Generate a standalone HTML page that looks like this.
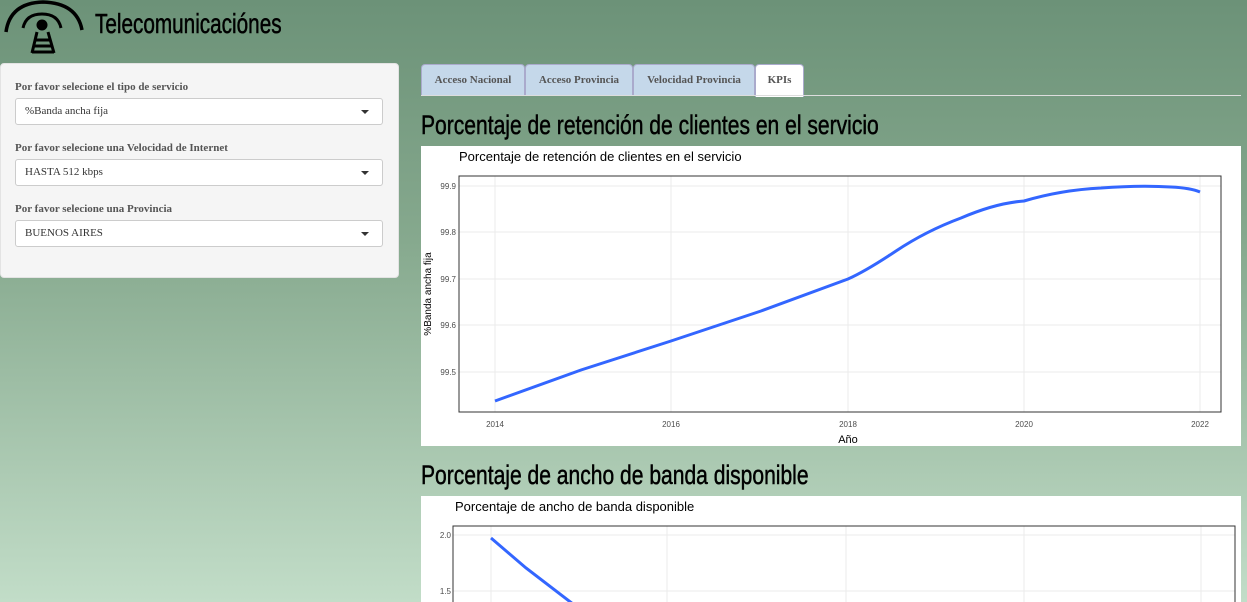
<!DOCTYPE html>
<html><head><meta charset="utf-8"><style>
body{margin:0;width:1247px;height:602px;overflow:hidden;background:linear-gradient(#6c9278 0%,#86a98e 40%,#c2ddc8 100%);font-family:"Liberation Serif",serif;position:relative}
.t{position:absolute;font-family:"Liberation Sans",sans-serif;color:#000;transform-origin:0 0;white-space:nowrap;-webkit-text-stroke:0.5px #000}
.side{position:absolute;left:0;top:63px;width:397px;height:213px;background:#f5f5f5;border:1px solid #e3e3e3;border-radius:4px}
.lbl{position:absolute;left:14px;font-size:11px;font-weight:bold;color:#555}
.sel{position:absolute;left:14px;width:366px;height:25px;background:#fff;border:1px solid #ccc;border-radius:3px;font-size:11px;color:#333;line-height:25px;text-indent:9px}
.sel:after{content:"";position:absolute;right:13px;top:11px;border:4px solid transparent;border-top:4px solid #333}
.tab{position:absolute;top:64px;height:31px;background:#c5d8ea;border:1px solid #aac;border-bottom:none;border-radius:4px 4px 0 0;font-size:11px;font-weight:bold;color:#555;line-height:31px;text-align:center}
</style></head><body>
<svg style="position:absolute;left:0;top:0" width="90" height="58">
<path d="M6 32 Q10 3 43 2 Q77 3 82 30" stroke="#000" stroke-width="3.5" fill="none"/>
<path d="M23 28 Q26 14 42 14 Q58 14 61 28" stroke="#000" stroke-width="3" fill="none"/>
<circle cx="42" cy="25" r="5.5" fill="#000"/>
<path d="M37 32 L32 53 M48 32 L54 53 M35 40 H51 M34 46 H52 M32 52 H54" stroke="#000" stroke-width="3" fill="none"/>
</svg>
<div class="t" style="left:95px;top:8px;font-size:28px;transform:scaleX(0.74)">Telecomunicaciónes</div>
<div class="side">
<div class="lbl" style="top:17px">Por favor selecione el tipo de servicio</div>
<div class="sel" style="top:34px">%Banda ancha fija</div>
<div class="lbl" style="top:78px">Por favor selecione una Velocidad de Internet</div>
<div class="sel" style="top:95px">HASTA 512 kbps</div>
<div class="lbl" style="top:139px">Por favor selecione una Provincia</div>
<div class="sel" style="top:156px">BUENOS AIRES</div>
</div>
<div class="tab" style="left:421px;width:102px">Acceso Nacional</div>
<div class="tab" style="left:525px;width:106px">Acceso Provincia</div>
<div class="tab" style="left:633px;width:120px">Velocidad Provincia</div>
<div class="tab" style="left:755px;width:47px;background:#fff;color:#555;height:32px">KPIs</div>
<div style="position:absolute;left:421px;top:95px;width:820px;height:1px;background:#ddd"></div>
<div class="t" style="left:421px;top:110px;font-size:27px;transform:scaleX(0.78)">Porcentaje de retención de clientes en el servicio</div>
<svg style="position:absolute;left:421px;top:146px" width="820" height="300" font-family="Liberation Sans,sans-serif">
<rect width="820" height="300" fill="#fff"/>
<text x="38" y="15" font-size="13">Porcentaje de retención de clientes en el servicio</text>
<g stroke="#ebebeb"><line x1="74" y1="30" x2="74" y2="266"/><line x1="250" y1="30" x2="250" y2="266"/><line x1="427" y1="30" x2="427" y2="266"/><line x1="603" y1="30" x2="603" y2="266"/><line x1="779" y1="30" x2="779" y2="266"/>
<line x1="38" y1="40" x2="800" y2="40"/><line x1="38" y1="86" x2="800" y2="86"/><line x1="38" y1="133" x2="800" y2="133"/><line x1="38" y1="179" x2="800" y2="179"/><line x1="38" y1="226" x2="800" y2="226"/></g>
<rect x="38" y="30" width="762" height="236" fill="none" stroke="#333"/>
<g font-size="8" fill="#4d4d4d" text-anchor="end"><text x="35" y="43">99.9</text><text x="35" y="89">99.8</text><text x="35" y="136">99.7</text><text x="35" y="182">99.6</text><text x="35" y="229">99.5</text></g>
<g font-size="8" fill="#4d4d4d" text-anchor="middle"><text x="74" y="281">2014</text><text x="250" y="281">2016</text><text x="427" y="281">2018</text><text x="603" y="281">2020</text><text x="779" y="281">2022</text></g>
<text x="427" y="297" font-size="11" text-anchor="middle">Año</text>
<text transform="translate(10,148) rotate(-90)" font-size="10" text-anchor="middle">%Banda ancha fija</text>
<path d="M74 255 L160 224 L250 195 L340 165 L427 133 Q445 125 475 105 Q505 85 540 72 Q575 57 603 55 Q640 44 680 42 Q720 39 750 41 Q770 42 779 46" fill="none" stroke="#3366ff" stroke-width="3"/>
</svg>
<div class="t" style="left:421px;top:460px;font-size:27px;transform:scaleX(0.78)">Porcentaje de ancho de banda disponible</div>
<svg style="position:absolute;left:421px;top:496px" width="820" height="106" font-family="Liberation Sans,sans-serif">
<rect width="820" height="106" fill="#fff"/>
<text x="34" y="15" font-size="13">Porcentaje de ancho de banda disponible</text>
<g stroke="#ebebeb"><line x1="70" y1="30" x2="70" y2="106"/><line x1="246" y1="30" x2="246" y2="106"/><line x1="425" y1="30" x2="425" y2="106"/><line x1="603" y1="30" x2="603" y2="106"/><line x1="780" y1="30" x2="780" y2="106"/><line x1="32" y1="39" x2="814" y2="39"/><line x1="32" y1="95" x2="814" y2="95"/></g>
<path d="M32 106 V30 H814 V106" fill="none" stroke="#333"/>
<g font-size="8" fill="#4d4d4d" text-anchor="end"><text x="30" y="42">2.0</text><text x="30" y="98">1.5</text></g>
<path d="M70 42 L105 72 L152 108" fill="none" stroke="#3366ff" stroke-width="3"/>
</svg>
</body></html>
